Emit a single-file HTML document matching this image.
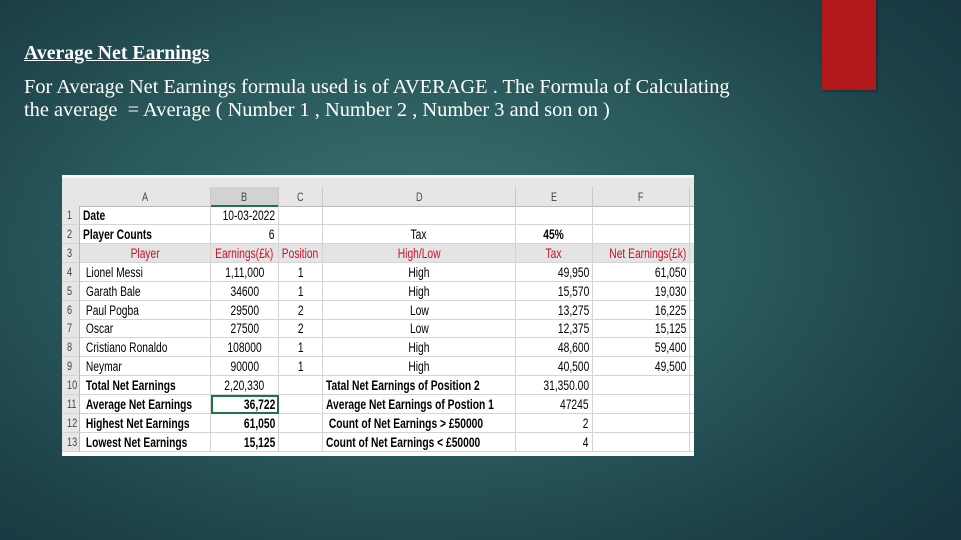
<!DOCTYPE html>
<html><head><meta charset="utf-8"><style>
body{margin:0;width:961px;height:540px;overflow:hidden;position:relative;
background:radial-gradient(ellipse 700px 420px at 420px 250px,#3c726f 0%,#2a5a5c 45%,#1c4048 80%,#173540 100%);
font-family:"Liberation Serif",serif;color:#fff}
.red{position:absolute;left:822px;top:0;width:54px;height:90px;background:#b3191b;box-shadow:1px 1px 3px rgba(0,0,0,.4)}
h1{position:absolute;left:24px;top:42px;margin:0;font-size:19.8px;font-weight:bold;text-decoration:underline}
p{position:absolute;left:24px;top:76px;margin:0;font-size:20.4px;line-height:23px;white-space:nowrap}
.sheet{position:absolute;left:62px;top:175px;width:632px;height:281px;background:#fff;
font-family:"Liberation Sans",sans-serif;font-size:13.5px;color:#000;overflow:hidden}
.c{position:absolute;height:19px;line-height:19px;box-sizing:border-box;border-right:1px solid #d4d4d4;border-bottom:1px solid #d4d4d4;white-space:nowrap;overflow:visible;padding:0 3px;display:flex;justify-content:flex-start}
.c span{flex-shrink:0;display:inline-block;transform:scaleX(0.76);transform-origin:left center}
.r{justify-content:flex-end}.m{justify-content:center}
.r span{transform-origin:right center}.m span{transform-origin:center center}
.h{background:#e6e6e6;color:#444;border-right:1px solid #c8c8c8;border-bottom:1px solid #b8b8b8}
.n{background:#e6e6e6;color:#444;padding-left:5px;font-size:12px;border-right:1px solid #b8b8b8}
.b{font-weight:bold}.red2{color:#d0102a}
.g{background:#e4e4e4}
</style></head><body>
<div class="red"></div>
<h1>Average Net Earnings</h1>
<p>For Average Net Earnings formula used is of AVERAGE . The Formula of Calculating<br>the average&nbsp; = Average ( Number 1 , Number 2 , Number 3 and son on )</p>
<div class="sheet" id="s"></div>
<script>
var cols=[[0,18],[18,131],[149,68],[217,44],[261,193],[454,77],[531,97],[628,10]];
var s=document.getElementById('s'),h='';
h+='<div style="position:absolute;left:0;top:0;width:632px;height:3px;background:#f4f4f4"></div>';
h+='<div style="position:absolute;left:0;top:3px;width:632px;height:28px;background:#e6e6e6;border-bottom:1px solid #b8b8b8"></div>';
var hd=['','A','B','C','D','E','F',''];
for(var i=0;i<8;i++){h+='<div class="c h m" style="left:'+cols[i][0]+'px;top:12px;width:'+cols[i][1]+'px;height:20px;line-height:20px;font-size:12px;'+(i==2?'border-bottom:2px solid #217346;background:#d2d2d2;':'')+(i==0?'border:0;':'')+'"><span>'+hd[i]+'</span></div>';}
var rows=[
[['b','Date'],['r','10-03-2022'],['',''],['',''],['',''],['','']],
[['b','Player Counts'],['r','6'],['',''],['m','Tax'],['m b','45%'],['','']],
[['m red2','Player'],['m red2','Earnings(£k)'],['m red2','Position'],['m red2','High/Low'],['m red2','Tax'],['r red2','Net Earnings(£k)']],
[['','&nbsp;Lionel Messi'],['m','1,11,000'],['m','1'],['m','High'],['r','49,950'],['r','61,050']],
[['','&nbsp;Garath Bale'],['m','34600'],['m','1'],['m','High'],['r','15,570'],['r','19,030']],
[['','&nbsp;Paul Pogba'],['m','29500'],['m','2'],['m','Low'],['r','13,275'],['r','16,225']],
[['','&nbsp;Oscar'],['m','27500'],['m','2'],['m','Low'],['r','12,375'],['r','15,125']],
[['','&nbsp;Cristiano Ronaldo'],['m','108000'],['m','1'],['m','High'],['r','48,600'],['r','59,400']],
[['','&nbsp;Neymar'],['m','90000'],['m','1'],['m','High'],['r','40,500'],['r','49,500']],
[['b','&nbsp;Total Net Earnings'],['m','2,20,330'],['',''],['b','Tatal Net Earnings of Position 2'],['r','31,350.00'],['','']],
[['b','&nbsp;Average Net Earnings'],['r b','36,722'],['',''],['b','Average Net Earnings of Postion 1'],['r','47245'],['','']],
[['b','&nbsp;Highest Net Earnings'],['r b','61,050'],['',''],['b','&nbsp;Count of Net Earnings &gt; £50000'],['r','2'],['','']],
[['b','&nbsp;Lowest Net Earnings'],['r b','15,125'],['',''],['b','Count of Net Earnings &lt; £50000'],['r','4'],['','']]];
for(var r=0;r<13;r++){var t=31+r*18.9;var g=r==2?' g':'';
h+='<div class="c n'+'" style="left:0;top:'+t+'px;width:18px"><span>'+(r+1)+'</span></div>';
for(var k=0;k<6;k++){var cl=rows[r][k][0];var st='left:'+cols[k+1][0]+'px;top:'+t+'px;width:'+cols[k+1][1]+'px;';
if(r==10&&k==1)st+='outline:2px solid #217346;outline-offset:-2px;';
h+='<div class="c '+cl+g+'" style="'+st+'"><span>'+rows[r][k][1]+'</span></div>';}
h+='<div class="c'+g+'" style="left:628px;top:'+t+'px;width:10px;border-right:0"></div>';}
s.innerHTML=h;
</script>
</body></html>
